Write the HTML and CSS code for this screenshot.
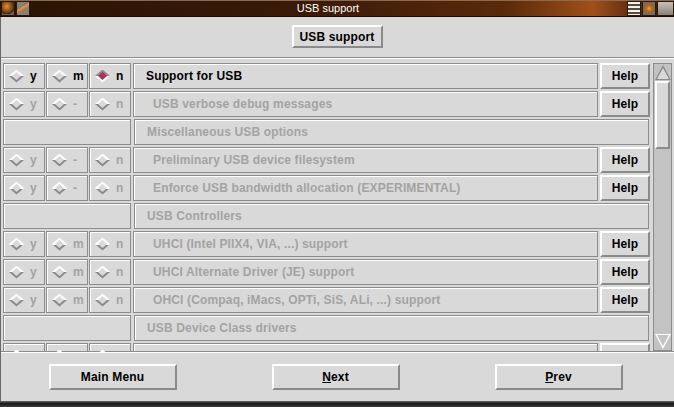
FILE: index.html
```html
<!DOCTYPE html>
<html lang="en">
<head>
  <meta charset="UTF-8">
  <title>USB support</title>
  <link rel="stylesheet" href="styles.css">
</head>
<body>

<div class="titlebar">
  <div class="tb-icon ball"></div>
  <div class="tb-icon shade"></div>
  <div class="tb-title">USB support</div>
  <div class="tb-icon menu"></div>
  <div class="tb-icon close"></div>
  <div class="tb-icon arrow"></div>
</div>

<div class="window">
  <div class="top">
    <button class="raised top-btn">USB support</button>
  </div>

  <div class="main">
    <div class="list">
      <div class="row">
        <div class="cell opt"><span class="dia"></span>y</div>
        <div class="cell opt"><span class="dia"></span>m</div>
        <div class="cell opt"><span class="dia on"></span>n</div>
        <div class="cell label">Support for USB</div>
        <button class="raised help">Help</button>
      </div>
      <div class="row off">
        <div class="cell opt"><span class="dia"></span>y</div>
        <div class="cell opt"><span class="dia"></span>-</div>
        <div class="cell opt"><span class="dia"></span>n</div>
        <div class="cell label sub">USB verbose debug messages</div>
        <button class="raised help">Help</button>
      </div>
      <div class="row off">
        <div class="cell blank"></div>
        <div class="cell label comment">Miscellaneous USB options</div>
      </div>
      <div class="row off">
        <div class="cell opt"><span class="dia"></span>y</div>
        <div class="cell opt"><span class="dia"></span>-</div>
        <div class="cell opt"><span class="dia"></span>n</div>
        <div class="cell label sub">Preliminary USB device filesystem</div>
        <button class="raised help">Help</button>
      </div>
      <div class="row off">
        <div class="cell opt"><span class="dia"></span>y</div>
        <div class="cell opt"><span class="dia"></span>-</div>
        <div class="cell opt"><span class="dia"></span>n</div>
        <div class="cell label sub">Enforce USB bandwidth allocation (EXPERIMENTAL)</div>
        <button class="raised help">Help</button>
      </div>
      <div class="row off">
        <div class="cell blank"></div>
        <div class="cell label comment">USB Controllers</div>
      </div>
      <div class="row off">
        <div class="cell opt"><span class="dia"></span>y</div>
        <div class="cell opt"><span class="dia"></span>m</div>
        <div class="cell opt"><span class="dia"></span>n</div>
        <div class="cell label sub">UHCI (Intel PIIX4, VIA, ...) support</div>
        <button class="raised help">Help</button>
      </div>
      <div class="row off">
        <div class="cell opt"><span class="dia"></span>y</div>
        <div class="cell opt"><span class="dia"></span>m</div>
        <div class="cell opt"><span class="dia"></span>n</div>
        <div class="cell label sub">UHCI Alternate Driver (JE) support</div>
        <button class="raised help">Help</button>
      </div>
      <div class="row off">
        <div class="cell opt"><span class="dia"></span>y</div>
        <div class="cell opt"><span class="dia"></span>m</div>
        <div class="cell opt"><span class="dia"></span>n</div>
        <div class="cell label sub">OHCI (Compaq, iMacs, OPTi, SiS, ALi, ...) support</div>
        <button class="raised help">Help</button>
      </div>
      <div class="row off">
        <div class="cell blank"></div>
        <div class="cell label comment">USB Device Class drivers</div>
      </div>
      <div class="row off">
        <div class="cell opt"><span class="dia"></span></div>
        <div class="cell opt"><span class="dia"></span></div>
        <div class="cell opt"><span class="dia"></span></div>
        <div class="cell label sub"></div>
        <button class="raised help">Help</button>
      </div>
    </div>

    <div class="scrollbar">
      <div class="sb-arrow up"></div>
      <div class="sb-thumb"></div>
      <div class="sb-space"></div>
      <div class="sb-arrow down"></div>
    </div>
  </div>

  <div class="bottom">
    <button class="raised nav">Main Menu</button>
    <button class="raised nav"><u>N</u>ext</button>
    <button class="raised nav"><u>P</u>rev</button>
  </div>
</div>

<div class="frame-bottom"></div>

</body>
</html>
```

FILE: styles.css
```css
body {
  margin: 0;
  width: 674px;
  height: 407px;
  overflow: hidden;
  background: #d9d9d9;
  font: bold 12px "Liberation Sans", Arial, sans-serif;
  letter-spacing: 0.15px;
  color: #000;
}

/* window manager title bar */
.titlebar {
  height: 17px;
  display: flex;
  align-items: stretch;
  background: linear-gradient(to right, #2a1305 0%, #3a1a07 45%, #5a2a0a 75%, #a0501a 88%, #6a3010 93%, #2a1305 100%);
  box-shadow: inset 0 1px #8a6a50, inset 0 -1px #1a0a02;
}

.tb-title {
  flex: 1;
  text-align: center;
  color: #fff;
  font-weight: normal;
  font-size: 11px;
  letter-spacing: 0;
  line-height: 17px;
}

.tb-icon {
  width: 12px;
  margin: 1px 0 1px 1px;
  background: linear-gradient(#9a8a78, #5a4a3a);
  border: 1px solid #2a1a0a;
}

.tb-icon.ball {
  background: radial-gradient(circle at 40% 35%, #e09040 0, #8a4a10 45%, #3a2410 70%, #6a6058 72%);
}

.tb-icon.shade {
  background: linear-gradient(150deg, #8a8078 40%, #e0a050 41%, #c07020 60%, #8a8078 61%);
}

.tb-icon.menu {
  background: repeating-linear-gradient(#f0f0f0 0 2px, #5a4a3a 2px 4px);
}

.tb-icon.close {
  background: radial-gradient(circle, #f0a040 0, #c06010 35%, #7a6a5a 60%);
}

.tb-icon.arrow {
  width: 15px;
  margin-right: 0;
  background: linear-gradient(#c8c0b8, #8a8078);
}

/* main window */
.window {
  display: flex;
  flex-direction: column;
  height: 384px;
  border-left: 1px solid #6a6a6a;
}

.top {
  height: 40px;
  display: flex;
  justify-content: center;
  align-items: center;
  border-bottom: 1px solid #8c8c8c;
  box-shadow: 0 1px #fff;
}

.raised {
  font: bold 12px "Liberation Sans", Arial, sans-serif;
  letter-spacing: 0.15px;
  background: #d9d9d9;
  color: #000;
  border: 2px solid;
  border-color: #fff #8a8a8a #8a8a8a #fff;
  padding: 0;
  margin: 0;
}

.top-btn {
  width: 91px;
  height: 23px;
  margin-left: -1px;
  margin-top: -1px;
}

.main {
  display: flex;
  height: 294px;
  padding-top: 5px;
  box-sizing: border-box;
  overflow: hidden;
}

.list {
  width: 647px;
  margin-left: 2px;
}

.row {
  display: flex;
  gap: 1px;
  height: 26px;
  margin-bottom: 2px;
}

.cell {
  border: 1px solid #8c8c8c;
  box-shadow: inset 1px 1px #fff;
  display: flex;
  align-items: center;
  box-sizing: border-box;
}

.opt {
  width: 42px;
  padding-left: 5px;
  gap: 6px;
}

.blank {
  width: 128px;
}

.label {
  flex: 1;
  margin-left: 1px;
  padding-left: 12px;
}

.label.sub {
  padding-left: 19px;
}

.label.comment {
  margin-left: 2px;
  margin-right: 1px;
  padding-left: 12px;
}

.off .opt,
.off .label {
  color: #a3a3a3;
}

.help {
  width: 50px;
  height: 26px;
  margin-left: 1px;
}

/* diamond indicator */
.dia {
  position: relative;
  width: 15px;
  height: 13px;
  flex: none;
  clip-path: polygon(50% 0, 100% 50%, 50% 100%, 0 50%);
  background: linear-gradient(#fff 50%, #8a8a8a 50%);
}

.dia::after {
  content: "";
  position: absolute;
  left: 3px;
  top: 2.5px;
  width: 9px;
  height: 8px;
  clip-path: polygon(50% 0, 100% 50%, 50% 100%, 0 50%);
  background: #d9d9d9;
}

.dia.on {
  background: linear-gradient(#8a8a8a 50%, #fff 50%);
}

.dia.on::after {
  background: #b03060;
}

/* scrollbar */
.scrollbar {
  width: 19px;
  height: 288px;
  margin-left: 3px;
  background: #c3c3c3;
  border: 1px solid #8c8c8c;
  box-sizing: border-box;
  display: flex;
  flex-direction: column;
}

.sb-arrow {
  height: 17px;
  position: relative;
}

.sb-arrow::before {
  content: "";
  position: absolute;
  left: 1px;
  border-left: 8px solid transparent;
  border-right: 8px solid transparent;
}

.sb-arrow.up::before {
  top: 1px;
  border-bottom: 15px solid #8a8a8a;
}

.sb-arrow.up::after {
  content: "";
  position: absolute;
  left: 3px;
  top: 4px;
  border-left: 6px solid transparent;
  border-right: 6px solid transparent;
  border-bottom: 11px solid #d9d9d9;
}

.sb-arrow.down::before {
  bottom: 1px;
  border-top: 15px solid #fff;
}

.sb-arrow.down::after {
  content: "";
  position: absolute;
  left: 3px;
  bottom: 4px;
  border-left: 6px solid transparent;
  border-right: 6px solid transparent;
  border-top: 11px solid #c3c3c3;
}

.sb-thumb {
  height: 64px;
  margin: 0 1px;
  background: #d9d9d9;
  border: 2px solid;
  border-color: #fff #8a8a8a #8a8a8a #fff;
}

.sb-space {
  flex: 1;
}

/* bottom buttons */
.bottom {
  flex: 1;
  display: flex;
  justify-content: space-around;
  align-items: center;
  padding-right: 4px;
  border-top: 1px solid #fff;
  box-shadow: 0 -1px #8c8c8c;
}

.nav {
  width: 128px;
  height: 26px;
}

.frame-bottom {
  height: 6px;
  background: linear-gradient(#6a6a6a, #1a1a1a 40%, #3a3a3a);
}
```
